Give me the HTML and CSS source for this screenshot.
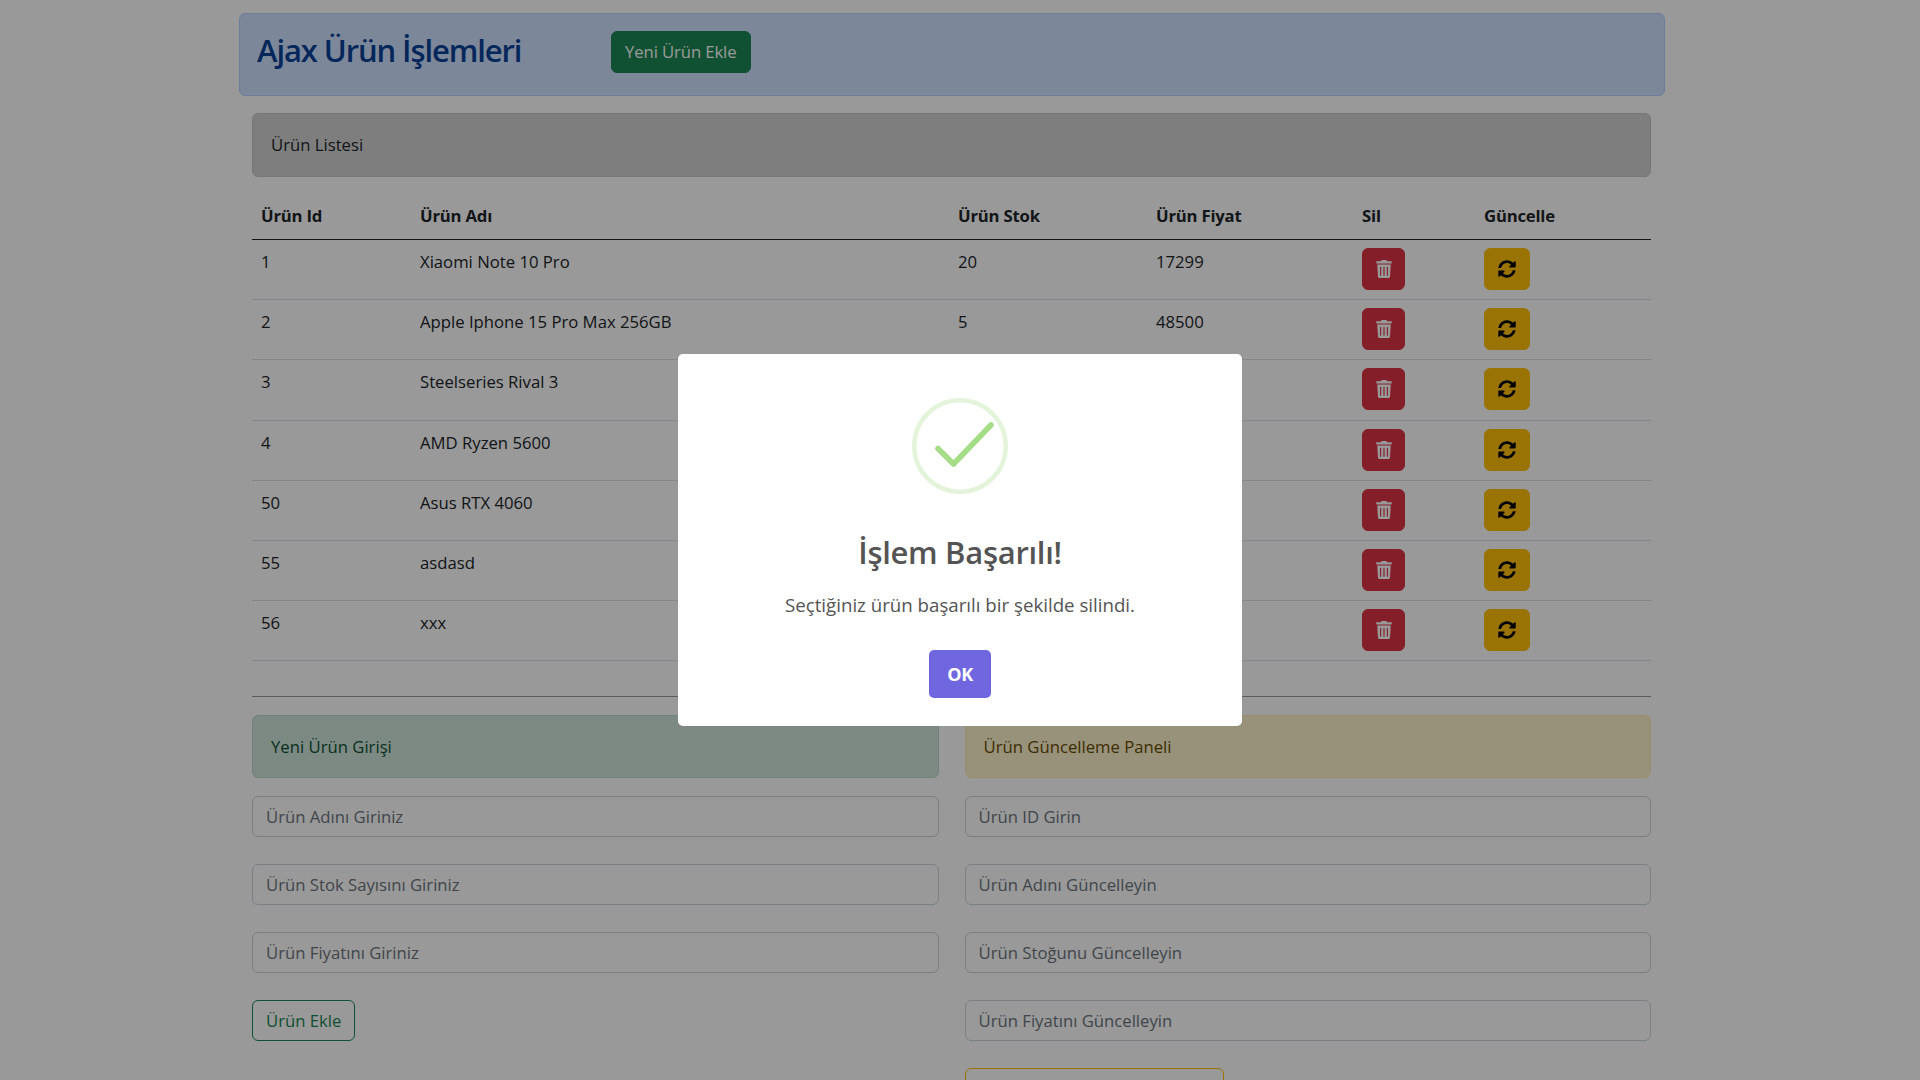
FILE: index.html
```html
<!DOCTYPE html>
<html lang="tr">
<head>
<meta charset="utf-8">
<title>Ajax Ürün İşlemleri</title>
<link rel="stylesheet" href="styles.css">
</head>
<body>
<div class="page">
  <header class="banner">
    <h1 class="banner-title">Ajax Ürün İşlemleri</h1>
    <button class="btn btn-new">Yeni Ürün Ekle</button>
  </header>
  <main class="content">
    <div class="panel panel-grey">Ürün Listesi</div>
    <table class="products">
      <thead>
        <tr><th class="c-id">Ürün Id</th><th class="c-name">Ürün Adı</th><th class="c-stock">Ürün Stok</th><th class="c-price">Ürün Fiyat</th><th class="c-del">Sil</th><th>Güncelle</th></tr>
      </thead>
      <tbody>
        <tr><td>1</td><td>Xiaomi Note 10 Pro</td><td>20</td><td>17299</td>
          <td><button class="btn icon-btn btn-del"><svg viewBox="0 0 448 512"><use href="#trash"/></svg></button></td>
          <td><button class="btn icon-btn btn-upd"><svg viewBox="0 0 512 512"><use href="#sync"/></svg></button></td></tr>
        <tr><td>2</td><td>Apple Iphone 15 Pro Max 256GB</td><td>5</td><td>48500</td>
          <td><button class="btn icon-btn btn-del"><svg viewBox="0 0 448 512"><use href="#trash"/></svg></button></td>
          <td><button class="btn icon-btn btn-upd"><svg viewBox="0 0 512 512"><use href="#sync"/></svg></button></td></tr>
        <tr><td>3</td><td>Steelseries Rival 3</td><td></td><td></td>
          <td><button class="btn icon-btn btn-del"><svg viewBox="0 0 448 512"><use href="#trash"/></svg></button></td>
          <td><button class="btn icon-btn btn-upd"><svg viewBox="0 0 512 512"><use href="#sync"/></svg></button></td></tr>
        <tr><td>4</td><td>AMD Ryzen 5600</td><td></td><td></td>
          <td><button class="btn icon-btn btn-del"><svg viewBox="0 0 448 512"><use href="#trash"/></svg></button></td>
          <td><button class="btn icon-btn btn-upd"><svg viewBox="0 0 512 512"><use href="#sync"/></svg></button></td></tr>
        <tr><td>50</td><td>Asus RTX 4060</td><td></td><td></td>
          <td><button class="btn icon-btn btn-del"><svg viewBox="0 0 448 512"><use href="#trash"/></svg></button></td>
          <td><button class="btn icon-btn btn-upd"><svg viewBox="0 0 512 512"><use href="#sync"/></svg></button></td></tr>
        <tr><td>55</td><td>asdasd</td><td></td><td></td>
          <td><button class="btn icon-btn btn-del"><svg viewBox="0 0 448 512"><use href="#trash"/></svg></button></td>
          <td><button class="btn icon-btn btn-upd"><svg viewBox="0 0 512 512"><use href="#sync"/></svg></button></td></tr>
        <tr><td>56</td><td>xxx</td><td></td><td></td>
          <td><button class="btn icon-btn btn-del"><svg viewBox="0 0 448 512"><use href="#trash"/></svg></button></td>
          <td><button class="btn icon-btn btn-upd"><svg viewBox="0 0 512 512"><use href="#sync"/></svg></button></td></tr>
      </tbody>
    </table>
    <hr class="divider">
    <section class="forms">
      <div class="form-col">
        <div class="panel panel-green">Yeni Ürün Girişi</div>
        <input class="field" placeholder="Ürün Adını Giriniz">
        <input class="field" placeholder="Ürün Stok Sayısını Giriniz">
        <input class="field" placeholder="Ürün Fiyatını Giriniz">
        <div class="form-actions"><button class="btn btn-add">Ürün Ekle</button></div>
      </div>
      <div class="form-col">
        <div class="panel panel-yellow">Ürün Güncelleme Paneli</div>
        <input class="field" placeholder="Ürün ID Girin">
        <input class="field" placeholder="Ürün Adını Güncelleyin">
        <input class="field" placeholder="Ürün Stoğunu Güncelleyin">
        <input class="field" placeholder="Ürün Fiyatını Güncelleyin">
        <div class="form-actions"><button class="btn btn-save">Ürünü Güncelleyin</button></div>
      </div>
    </section>
  </main>
</div>
<svg class="defs" aria-hidden="true">
  <symbol id="trash" viewBox="0 0 448 512"><path d="M432 32H312l-9.400-18.700A24 24 0 0 0 281.100 0H166.800a23.700 23.700 0 0 0-21.400 13.300L136 32H16A16 16 0 0 0 0 48v32a16 16 0 0 0 16 16h416a16 16 0 0 0 16-16V48a16 16 0 0 0-16-16zM53.200 467a48 48 0 0 0 47.900 45h245.800a48 48 0 0 0 47.900-45L416 128H32zM304 208a16 16 0 0 1 32 0v224a16 16 0 0 1-32 0zm-96 0a16 16 0 0 1 32 0v224a16 16 0 0 1-32 0zm-96 0a16 16 0 0 1 32 0v224a16 16 0 0 1-32 0z"/></symbol>
  <symbol id="sync" viewBox="0 0 512 512"><path d="M370.720 133.280C339.458 104.008 298.888 87.962 255.848 88c-77.458.068-144.328 53.178-162.791 126.850-1.344 5.363-6.122 9.150-11.651 9.150H24.103c-7.498 0-13.194-6.807-11.807-14.176C33.933 94.924 134.813 8 256 8c66.448 0 126.791 26.136 171.315 68.685L463.030 40.970C478.149 25.851 504 36.559 504 57.941V192c0 13.255-10.745 24-24 24H345.941c-21.382 0-32.090-25.851-16.971-40.971l41.750-41.749zM32 296h134.059c21.382 0 32.090 25.851 16.971 40.971l-41.750 41.750c31.262 29.273 71.835 45.319 114.876 45.280 77.418-.070 144.315-53.144 162.787-126.849 1.344-5.363 6.122-9.150 11.651-9.150h57.304c7.498 0 13.194 6.807 11.807 14.176C478.067 417.076 377.187 504 256 504c-66.448 0-126.791-26.136-171.315-68.685L48.970 471.030C33.851 486.149 8 475.441 8 454.059V320c0-13.255 10.745-24 24-24z"/></symbol>
</svg>
<div class="backdrop">
  <div class="dialog" role="dialog">
    <div class="check-icon">
      <svg viewBox="0 0 96 96"><circle class="ring" cx="48" cy="48" r="45.800"/><path class="tick" d="M26 50.500 L41.500 66 L79 27"/></svg>
    </div>
    <h2 class="dialog-title">İşlem Başarılı!</h2>
    <p class="dialog-text">Seçtiğiniz ürün başarılı bir şekilde silindi.</p>
    <button class="ok">OK</button>
  </div>
</div>
</body>
</html>
```
FILE: styles.css
```css
* { box-sizing: border-box; }
html, body { height: 100%; }
body { margin: 0; padding-right: 16px; overflow: hidden; background: #fff; color: #212529; font-family: "Open Sans", "Noto Sans", sans-serif; font-size: 16.7px; line-height: 26.4px; }
.page { width: 1426px; margin: 0 auto; padding-top: 13px; }
.banner { height: 83px; display: flex; align-items: flex-start; background: #cfe2ff; border: 1px solid #b6d4fe; border-radius: 6px; padding: 17px 17px 0; }
.banner-title { margin: 0; width: 354px; font-size: 31px; line-height: 38px; font-weight: 600; color: #084298; letter-spacing: -1.1px; }
.btn { font: inherit; border: 1px solid transparent; border-radius: 6px; cursor: pointer; }
.btn-new { height: 42px; padding: 0 13px; background: #198754; color: #fff; border-color: #198754; letter-spacing: -0.1px; }
.content { padding: 0 14px 0 13px; }
.panel { display: flex; align-items: center; height: 63px; padding: 1px 18px 0; border: 1px solid; border-radius: 6px; }
.panel-grey { height: 64px; margin-top: 17px; background: #d3d3d3; border-color: #c6c6c6; }
.panel-green { background: #d1e7dd; border-color: #badbcc; color: #0f5132; }
.panel-yellow { background: #fff3cd; border-color: #ffecb5; color: #664d03; }
.products { width: 100%; margin-top: 16px; border-collapse: separate; border-spacing: 0; table-layout: fixed; }
.products th { height: 47px; padding: 10px 9px 0; text-align: left; font-weight: 700; letter-spacing: -0.2px; border-bottom: 1px solid #212529; vertical-align: top; }
.products td { height: 60.2px; padding: 8px 9px 0; line-height: 28px; vertical-align: top; border-bottom: 1px solid #dee2e6; }
.c-id { width: 159px; }
.c-name { width: 538px; }
.c-stock { width: 198px; }
.c-price { width: 206px; }
.c-del { width: 122px; }
.icon-btn { height: 42px; display: flex; align-items: center; justify-content: center; padding: 0; }
.btn-del { width: 43px; background: #dc3545; border-color: #dc3545; }
.btn-del svg { width: 16px; height: 18px; fill: #fff; }
.btn-upd { width: 46px; background: #ffc107; border-color: #ffc107; }
.btn-upd svg { width: 18px; height: 18px; fill: #000; }
.divider { margin: 35px 0 18px; border: 0; border-top: 1px solid #999; }
.forms { display: grid; grid-template-columns: 1fr 1fr; column-gap: 26px; }
.form-col { display: flex; flex-direction: column; min-width: 0; }
.field { display: block; flex: none; width: 100%; height: 41px; margin-top: 27px; padding: 0 13px; font: inherit; background: #fff; border: 1px solid #ced4da; border-radius: 6px; color: #212529; }
.panel + .field { margin-top: 18px; }
.field::placeholder { color: #6c757d; opacity: 1; }
.form-actions { margin-top: 27px; }
.btn-add { height: 41px; padding: 0 13px; background: transparent; color: #198754; border-color: #198754; }
.btn-save { height: 41px; width: 259px; padding: 0 13px; background: transparent; color: #997404; border-color: #ffc107; }
.defs { display: none; }
.backdrop { position: fixed; inset: 0; background: rgba(0, 0, 0, .4); display: flex; align-items: center; justify-content: center; }
.dialog { width: 564px; height: 372px; background: #fff; border-radius: 5px; display: flex; flex-direction: column; align-items: center; padding-top: 44px; color: #545454; }
.check-icon { width: 96px; height: 96px; }
.check-icon svg { display: block; width: 96px; height: 96px; }
.ring { fill: none; stroke: rgba(165, 220, 134, .3); stroke-width: 4.4px; }
.tick { fill: none; stroke: #a5dc86; stroke-width: 5.5px; stroke-linecap: round; stroke-linejoin: round; }
.dialog-title { margin: 37px 0 0; font-size: 31px; line-height: 42px; font-weight: 600; letter-spacing: -0.3px; }
.dialog-text { margin: 18px 0 0; font-size: 18.7px; line-height: 27px; }
.ok { margin-top: 32px; width: 62px; height: 48px; border: 0; border-radius: 5px; background: #7066e0; color: #fff; font: inherit; font-size: 18px; font-weight: 700; letter-spacing: -0.3px; }
```
